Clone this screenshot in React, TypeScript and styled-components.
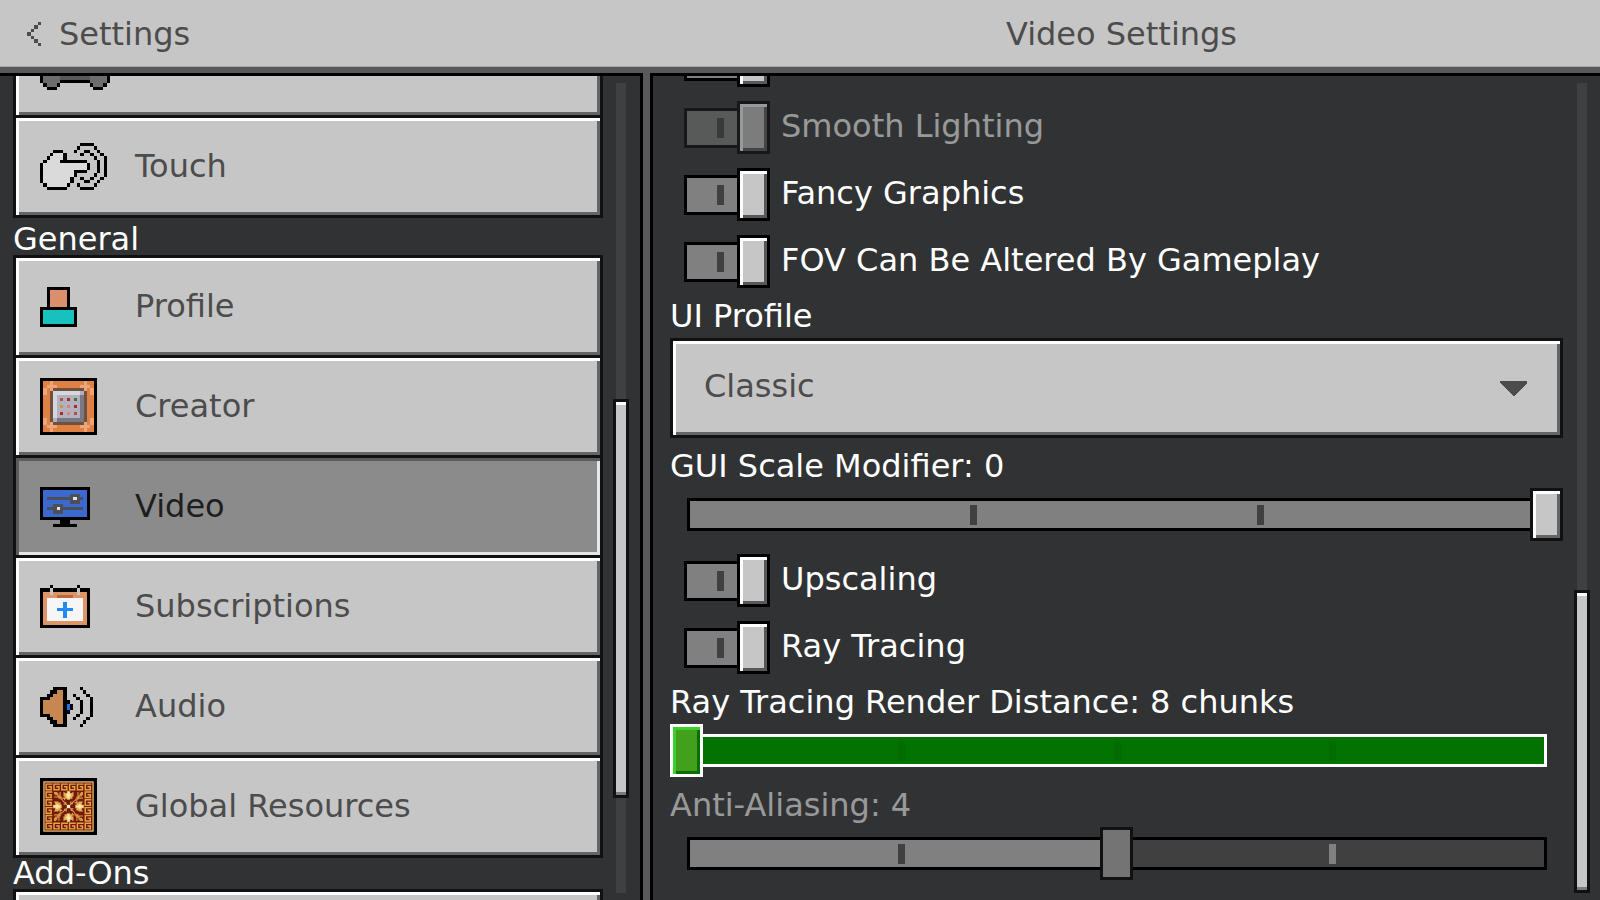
import React, { useId, useState } from "react";
import styled, { createGlobalStyle, css } from "styled-components";

const GlobalStyle = createGlobalStyle`
  *, *::before, *::after { box-sizing: border-box; }
  body { margin: 0; background: #313233; }
  body, button, select, input { font-family: "DejaVu Sans", sans-serif; font-size: 32px; line-height: 37px; }
`;

const raised = css`
  border: 3px solid #111112;
  background: #c6c6c6;
  box-shadow: inset 3px 3px 0 #ffffff, inset -3px -3px 0 #656566;
`;

const pressed = css`
  border: 3px solid #111112;
  background: #8b8b8b;
  box-shadow: inset 3px 3px 0 #5b5b5c, inset -3px -3px 0 #e6e6e8;
`;

/* ---------- page frame ---------- */

const Page = styled.div`
  display: flex;
  flex-direction: column;
  height: 100vh;
  overflow: hidden;
  background: #58585a;
`;

const Header = styled.header`
  display: flex;
  flex: none;
  align-items: center;
  height: 67px;
  padding-top: 2px;
  background: #c6c6c6;
  color: #4c4c4c;
  border-bottom: 1px solid #a8a8a9;
`;

const HeaderSide = styled.div`
  width: calc(40% + 3px);
  padding-left: 27px;
`;

const BackButton = styled.button`
  display: flex;
  align-items: center;
  gap: 18px;
  padding: 0;
  border: 0;
  background: none;
  color: inherit;
`;

const Title = styled.h1`
  flex: 1;
  margin: 0;
  font-size: 32px;
  font-weight: 400;
  text-align: center;
`;

const Body = styled.div`
  display: flex;
  flex: 1;
  gap: 7px;
  min-height: 0;
  margin-top: 6px;
`;

const SidePanel = styled.nav`
  display: flex;
  gap: 10px;
  width: calc(40% + 3px);
  padding: 0 11px 0 13px;
  overflow: hidden;
  background: #313233;
  border-top: 3px solid #000;
  border-right: 3px solid #000;
`;

const MainPanel = styled.main`
  display: flex;
  flex: 1;
  gap: 11px;
  padding: 0 10px 0 17px;
  overflow: hidden;
  background: #313233;
  border-top: 3px solid #000;
  border-left: 3px solid #000;
`;

/* ---------- scroll bar ---------- */

const ScrollTrack = styled.div<{ $before: number; $thumb: number; $after: number }>`
  display: grid;
  flex: none;
  grid-template-rows: ${p => p.$before}fr ${p => p.$thumb}fr ${p => p.$after}fr;
  width: 16px;
  margin: 7px 0;
  background: linear-gradient(#404041, #404041) center / 10px 100% no-repeat;
`;

const ScrollThumb = styled.div`
  grid-row: 2;
  border: 3px solid #111112;
  background: #c6c6c6;
  box-shadow: inset 0 3px 0 #ffffff, inset 0 -3px 0 #7b7b7c;
`;

/* ---------- category list ---------- */

const CategoryList = styled.div`
  flex: 1;
  min-width: 0;
  margin-top: -61px;
`;

const Group = styled.section`
  & + & { margin-top: 0; }
`;

const FirstGroup = styled(Group)`
  margin-bottom: 6px;
`;

const GroupTitle = styled.h2`
  height: 31px;
  margin: 0;
  color: #fff;
  font-size: 32px;
  font-weight: 400;
  line-height: 31px;
`;

const Category = styled.button<{ $active?: boolean }>`
  display: flex;
  align-items: center;
  width: 100%;
  height: 103px;
  padding: 0 24px;
  text-align: left;
  color: ${p => (p.$active ? "#1e1e1f" : "#4c4c4c")};
  ${p => (p.$active ? pressed : raised)}
  & + & { margin-top: -3px; }
`;

const IconSlot = styled.span`
  display: flex;
  flex: none;
  width: 95px;
`;

/* ---------- options ---------- */

const Options = styled.form`
  display: flex;
  flex: 1;
  flex-direction: column;
  justify-content: flex-end;
  min-width: 0;
  padding-bottom: 20px;
  color: #fff;
`;

const ToggleGroup = styled.div`
  display: flex;
  flex: none;
  flex-direction: column;
  gap: 14px;
`;

const ToggleRow = styled.label<{ $dim?: boolean }>`
  display: flex;
  align-items: center;
  gap: 11px;
  height: 53px;
  padding-left: 14px;
  line-height: 35px;
  opacity: ${p => (p.$dim ? 0.5 : 1)};
`;

const ToggleText = styled.span`
  padding-bottom: 2px;
`;

const Switch = styled.input`
  display: flex;
  flex: none;
  align-items: center;
  width: 86px;
  height: 53px;
  margin: 0;
  appearance: none;

  &::before {
    content: "";
    width: 53px;
    height: 40px;
    border: 3px solid #000;
    border-right: 0;
    background: linear-gradient(#404041, #404041) 30px center / 7px 20px no-repeat, #808080;
  }
  &::after {
    content: "";
    width: 33px;
    height: 53px;
    border: 3px solid #000;
    background: #c6c6c6;
    box-shadow: inset 3px 3px 0 #fff, inset -3px -3px 0 #58585a;
  }
`;

const OptionLabel = styled.label<{ $dim?: boolean }>`
  flex: none;
  height: 50px;
  padding-top: 7px;
  line-height: 43px;
  opacity: ${p => (p.$dim ? 0.5 : 1)};
`;

const SelectBox = styled.div`
  display: grid;
  flex: none;
  align-items: center;
  > * { grid-area: 1 / 1; }
  > svg { justify-self: end; margin-right: 36px; pointer-events: none; }
`;

const Select = styled.select`
  width: 100%;
  height: 100px;
  padding: 0 31px 4px;
  border-radius: 0;
  appearance: none;
  color: #4c4c4c;
  ${raised}
`;

type Tone = "plain" | "focus" | "dim";

const SliderBox = styled.div<{ $after?: boolean }>`
  display: grid;
  flex: none;
  align-items: center;
  height: 53px;
  margin-bottom: ${p => (p.$after ? 13 : 0)}px;
  > * { grid-area: 1 / 1; }
`;

const SliderTrack = styled.div<{ $tone: Tone; $fill: number }>`
  display: flex;
  align-items: center;
  justify-content: space-evenly;
  height: 33px;
  margin: 0 16px 0 17px;
  border: 3px solid ${p => (p.$tone === "focus" ? "#fff" : "#000")};
  background: ${p =>
    p.$tone === "focus"
      ? "#037300"
      : `linear-gradient(to right, #808080 ${p.$fill}%, #404041 ${p.$fill}%)`};
`;

const Tick = styled.span<{ $color: string }>`
  width: 7px;
  height: 20px;
  background: ${p => p.$color};
`;

const thumbs = {
  plain: css`${raised}`,
  focus: css`
    border: 3px solid #fff;
    background: #43a01c;
    box-shadow: inset 3px 3px 0 #3bd02a, inset -3px -3px 0 #0a6e06;
  `,
  dim: css`
    border: 3px solid #111112;
    background: #747474;
  `,
};

const Range = styled.input<{ $tone: Tone }>`
  width: 100%;
  height: 53px;
  margin: 0;
  appearance: none;
  background: none;
  &::-webkit-slider-thumb {
    appearance: none;
    box-sizing: border-box;
    width: 33px;
    height: 53px;
    border-radius: 0;
    ${p => thumbs[p.$tone]}
  }
`;

/* ---------- pixel icons ---------- */

const mirror = (rows: string[]) => [...rows, ...[...rows].reverse()];

const PixelIcon = ({ rows, colors }: { rows: string[]; colors: Record<string, string> }) => {
  const w = rows[0].length;
  const h = rows.length;
  const cells: React.ReactElement[] = [];
  rows.forEach((row, y) => {
    let x = 0;
    while (x < w) {
      const ch = row[x];
      let end = x + 1;
      while (end < w && row[end] === ch) end++;
      if (ch !== ".") {
        cells.push(
          <rect key={`${x}-${y}`} x={x} y={y} width={end - x} height={1} fill={ch === "#" ? "#000" : colors[ch]} />
        );
      }
      x = end;
    }
  });
  return (
    <svg
      width={Math.round((w * 10) / 3)}
      height={Math.round((h * 10) / 3)}
      viewBox={`0 0 ${w} ${h}`}
      preserveAspectRatio="none"
      shapeRendering="crispEdges"
      aria-hidden="true"
    >
      {cells}
    </svg>
  );
};

const controllerRows = [
  "...####.......####...",
  "..#gggg#######gggg#..",
  ".#ggggggggggggggggg#.",
  ".#ggggggggggggggggg#.",
  "#ggggggggggggggggggg#",
  "#ggggggggggggggggggg#",
  "#ggggggggggggggggggg#",
  "#ggggggggggggggggggg#",
  "#ggggggggggggggggggg#",
  "#gggggdddddddddggggg#",
  "#gggggdddddddddggggg#",
  "#ggggg#########ggggg#",
  ".#ggg#.........#ggg#.",
  "..###...........###..",
];

const touchRows = [
  "............####....",
  "...........#....#...",
  "....###...#..##..#..",
  "...#fff#....#..#..#.",
  "..#ffff#........#..#",
  ".#ffff########...#.#",
  "#fffffffffffff#..#.#",
  "#fffffffffffff#..#.#",
  "#fffffffff####...#.#",
  "#fffffffff#.....#..#",
  "#ffffffff#..#..#..#.",
  "#ffffffff#...##..#..",
  ".#ffffff#..#....#...",
  "..######....####....",
];

const profileRows = [
  "..#######..",
  "..#ooooo#..",
  "..#ooooo#..",
  "..#ooooo#..",
  "..#ooooo#..",
  "..#ooooo#..",
  "###########",
  "#ttttttttt#",
  "#ttttttttt#",
  "#ttttttttt#",
  "#ttttttttt#",
  "###########",
];

const creatorRows = [
  "#################",
  "#ooLoooooooooLoo#",
  "#oLLLoooooooLLLo#",
  "#LoLbbbbbbbbbLoL#",
  "#LobhhhhhhhhgboL#",
  "#oobhgggggggsboo#",
  "#oobhgrgRgGgsboo#",
  "#oobhgggggggsboo#",
  "#oobhgygpgRgsboo#",
  "#oobhgggggggsboo#",
  "#oobhgRgpgrgsboo#",
  "#oobhgggggggsboo#",
  "#LobgssssssssboL#",
  "#LoLbbbbbbbbbLoL#",
  "#oLLLoooooooLLLo#",
  "#ooLoooooooooLoo#",
  "#################",
];

const videoRows = [
  "###############",
  "#bbbbbbbbbbbbb#",
  "#bbbbbbbbkkkbb#",
  "#bkkkkkkkkwkkb#",
  "#bbbbbbbbkkkbb#",
  "#bbbkkkbbbbbbb#",
  "#bkkkwkkkkkkkb#",
  "#bbbkkkbbbbbbb#",
  "#bbbbbbbbbbbbb#",
  "###############",
  "......###......",
  "....#######....",
];

const subscriptionRows = [
  "...#.......#...",
  "###w#######w###",
  "#oowooooooowoo#",
  "#oooodddddoooo#",
  "#oWWWWWWWWWWWo#",
  "#oWWWWWBWWWWWo#",
  "#oWWWWWBWWWWWo#",
  "#oWWWBBBBBWWWo#",
  "#oWWWWWBWWWWWo#",
  "#oWWWWWBWWWWWo#",
  "#oWWWWWWWWWWWo#",
  "#ooooooooooooo#",
  "###############",
];

const audioRows = mirror([
  "....####....#...",
  "...##oo#.....#..",
  "..##ooo#..#...#.",
  "###oooo#...#...#",
  "#oooooo##...#..#",
  "#oooooo#B#..#..#",
]);

/* Glazed tile: a ring of key spirals round four rosettes. */
const TileIcon = () => {
  const ring: [number, number][] = [];
  for (let i = 0; i < 6; i++) {
    for (let j = 0; j < 6; j++) {
      if (i === 0 || j === 0 || i === 5 || j === 5) ring.push([i, j]);
    }
  }
  return (
    <svg width="57" height="57" viewBox="0 0 51 51" aria-hidden="true">
      <rect width="51" height="51" fill="#000" />
      <rect x="3" y="3" width="45" height="45" fill="#f6d68c" />
      <rect x="4" y="4" width="43" height="43" fill="#74180b" />
      {ring.map(([i, j]) => (
        <path
          key={`${i}-${j}`}
          transform={`translate(${4.5 + i * 7} ${4.5 + j * 7})`}
          d="M6.5 1H1V6H5.5V3.4H3"
          fill="none"
          stroke="#e3a646"
          strokeWidth="1.3"
        />
      ))}
      {[0, 90, 180, 270].map(a => (
        <g key={a} transform={`rotate(${a} 25.5 25.5)`}>
          <path d="M24 11.500h3v2h2v-1h1v4h-1v2h-2v1h-3v-1h-2v-2h-1v-4h1v1h2z" fill="#e0ad55" />
          <path d="M24.500 12.500h2v2h1v2h-1v2h-2v-2h-1v-2h1z" fill="#fbe6ab" />
          <path d="M12.500 12.500h3v1h1v2h1v-3h1v4h1v2h1v1h-2v-1h-2v-1h-4v-1h3v-1h-2v-1h-1z" fill="#d9973f" />
          <path d="M20 20l4 4M21 23.500h2v-2M20 18h2v2" fill="none" stroke="#d9a350" strokeWidth="1" />
        </g>
      ))}
      <rect x="24" y="24" width="3" height="3" fill="#fff3cf" />
    </svg>
  );
};

const BackArrow = () => (
  <svg width="14" height="24" viewBox="0 0 4 7" preserveAspectRatio="none" shapeRendering="crispEdges" aria-hidden="true">
    <path d="M3 0h1v1H3zM2 1h1v1H2zM1 2h1v1H1zM0 3h1v1H0zM1 4h1v1H1zM2 5h1v1H2zM3 6h1v1H3z" fill="#4c4c4c" />
  </svg>
);

const DownArrow = () => (
  <svg width="27" height="15" viewBox="0 0 27 15" shapeRendering="crispEdges" aria-hidden="true">
    <path d="M0 0h27v2L14 15h-1L0 2z" fill="#4c4c4c" />
  </svg>
);

const categories = [
  { name: "Profile", icon: <PixelIcon rows={profileRows} colors={{ o: "#d98f6c", t: "#17c1bd" }} /> },
  {
    name: "Creator",
    icon: (
      <PixelIcon
        rows={creatorRows}
        colors={{
          o: "#e08144", L: "#efa577", b: "#70503f", h: "#d6d6e0", g: "#b3b1bd", s: "#7b7885",
          r: "#b3504c", R: "#a92a2c", G: "#3b7a35", y: "#c39a4b", p: "#dc8080",
        }}
      />
    ),
  },
  { name: "Video", icon: <PixelIcon rows={videoRows} colors={{ b: "#3b69d0", k: "#4b4f58", w: "#e3e3e3" }} /> },
  {
    name: "Subscriptions",
    icon: <PixelIcon rows={subscriptionRows} colors={{ w: "#c9c4bd", o: "#dd9468", d: "#b8693f", W: "#f6f6f6", B: "#218bf3" }} />,
  },
  { name: "Audio", icon: <PixelIcon rows={audioRows} colors={{ o: "#c68750", B: "#1c74e8" }} /> },
  { name: "Global Resources", icon: <TileIcon /> },
];

/* ---------- option controls ---------- */

const Toggle = ({ text, dim }: { text: string; dim?: boolean }) => (
  <ToggleRow $dim={dim}>
    <Switch type="checkbox" role="switch" defaultChecked disabled={dim} />
    <ToggleText>{text}</ToggleText>
  </ToggleRow>
);

type SliderProps = {
  name: string;
  unit?: string;
  min: number;
  max: number;
  step: number;
  initial: number;
  tone?: Tone;
  spaced?: boolean;
};

const Slider = ({ name, unit = "", min, max, step, initial, tone = "plain", spaced }: SliderProps) => {
  const id = useId();
  const [value, setValue] = useState(initial);
  const steps = (max - min) / step;
  const fill = ((value - min) / (max - min)) * 100;
  const ticks = Array.from({ length: steps - 1 }, (_, i) => ((i + 1) / steps) * 100);
  const tickColor = (at: number) => (tone === "focus" ? "#046a02" : at <= fill ? "#404041" : "#808080");
  return (
    <>
      <OptionLabel htmlFor={id} $dim={tone === "dim"}>
        {name}: {value}{unit}
      </OptionLabel>
      <SliderBox $after={spaced}>
        <SliderTrack $tone={tone} $fill={fill}>
          {ticks.map(at => (
            <Tick key={at} $color={tickColor(at)} />
          ))}
        </SliderTrack>
        <Range
          id={id}
          type="range"
          $tone={tone}
          min={min}
          max={max}
          step={step}
          value={value}
          disabled={tone === "dim"}
          onChange={e => setValue(Number(e.target.value))}
        />
      </SliderBox>
    </>
  );
};

export default function App() {
  const [active, setActive] = useState("Video");
  return (
    <>
      <GlobalStyle />
      <Page>
        <Header>
          <HeaderSide>
            <BackButton type="button">
              <BackArrow />
              Settings
            </BackButton>
          </HeaderSide>
          <Title>Video Settings</Title>
        </Header>
        <Body>
          <SidePanel>
            <CategoryList>
              <FirstGroup>
                <Category type="button" aria-label="Controller">
                  <IconSlot>
                    <PixelIcon rows={controllerRows} colors={{ g: "#6d6d6e", d: "#58585a" }} />
                  </IconSlot>
                </Category>
                <Category type="button">
                  <IconSlot>
                    <PixelIcon rows={touchRows} colors={{ f: "#dadada" }} />
                  </IconSlot>
                  Touch
                </Category>
              </FirstGroup>
              <Group>
                <GroupTitle>General</GroupTitle>
                {categories.map(c => (
                  <Category key={c.name} type="button" $active={c.name === active} onClick={() => setActive(c.name)}>
                    <IconSlot>{c.icon}</IconSlot>
                    {c.name}
                  </Category>
                ))}
              </Group>
              <Group>
                <GroupTitle>Add-Ons</GroupTitle>
                <Category type="button" aria-label="Storage" />
              </Group>
            </CategoryList>
            <ScrollTrack $before={316} $thumb={399} $after={95}>
              <ScrollThumb />
            </ScrollTrack>
          </SidePanel>
          <MainPanel>
            <Options>
              <ToggleGroup>
                <ToggleRow aria-label="Clouds">
                  <Switch type="checkbox" role="switch" defaultChecked />
                </ToggleRow>
                <Toggle text="Smooth Lighting" dim />
                <Toggle text="Fancy Graphics" />
                <Toggle text="FOV Can Be Altered By Gameplay" />
              </ToggleGroup>
              <OptionLabel htmlFor="ui-profile">UI Profile</OptionLabel>
              <SelectBox>
                <Select id="ui-profile" defaultValue="Classic">
                  <option>Classic</option>
                </Select>
                <DownArrow />
              </SelectBox>
              <Slider name="GUI Scale Modifier" min={-3} max={0} step={1} initial={0} spaced />
              <ToggleGroup>
                <Toggle text="Upscaling" />
                <Toggle text="Ray Tracing" />
              </ToggleGroup>
              <Slider
                name="Ray Tracing Render Distance"
                unit=" chunks"
                min={8}
                max={24}
                step={4}
                initial={8}
                tone="focus"
              />
              <Slider name="Anti-Aliasing" min={0} max={8} step={2} initial={4} tone="dim" />
            </Options>
            <ScrollTrack $before={507} $thumb={303} $after={0}>
              <ScrollThumb />
            </ScrollTrack>
          </MainPanel>
        </Body>
      </Page>
    </>
  );
}
